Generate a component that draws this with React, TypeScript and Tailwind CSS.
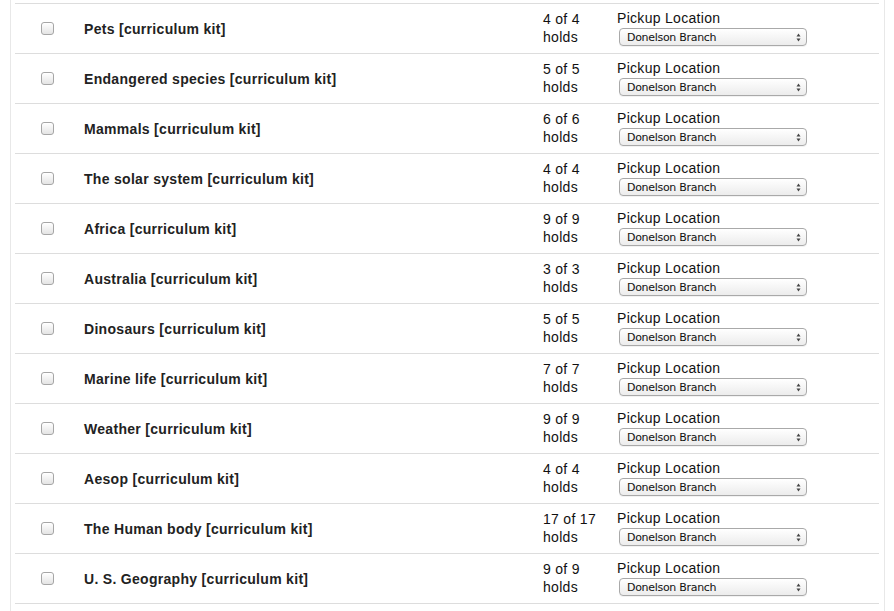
import React from "react";

const rows: [string, string][] = [
  ["Pets [curriculum kit]", "4 of 4"],
  ["Endangered species [curriculum kit]", "5 of 5"],
  ["Mammals [curriculum kit]", "6 of 6"],
  ["The solar system [curriculum kit]", "4 of 4"],
  ["Africa [curriculum kit]", "9 of 9"],
  ["Australia [curriculum kit]", "3 of 3"],
  ["Dinosaurs [curriculum kit]", "5 of 5"],
  ["Marine life [curriculum kit]", "7 of 7"],
  ["Weather [curriculum kit]", "9 of 9"],
  ["Aesop [curriculum kit]", "4 of 4"],
  ["The Human body [curriculum kit]", "17 of 17"],
  ["U. S. Geography [curriculum kit]", "9 of 9"],
];

function Checkbox() {
  return (
    <div className="w-[13px] h-[13px] rounded-[3px] border border-[#a6a6a6] bg-gradient-to-b from-[#ffffff] to-[#e4e4e4] shadow-[inset_0_1px_0_#fff]" />
  );
}

function SelectBox() {
  return (
    <div className="mt-px w-[188px] h-[18px] rounded-[4px] border border-[#a9a9a9] bg-gradient-to-b from-[#ffffff] to-[#ececec] flex items-center justify-between pl-[7px] pr-[5px] shadow-[0_1px_0_rgba(0,0,0,0.05)]">
      <span className="text-[11px] leading-none text-[#111] font-['DejaVu_Sans',sans-serif] tracking-[-0.3px]">
        Donelson Branch
      </span>
      <svg width="5" height="9" viewBox="0 0 5 9">
        <path d="M2.5 0.5 L4.5 3.5 L0.5 3.5 Z" fill="#444" />
        <path d="M2.5 8.5 L4.5 5.5 L0.5 5.5 Z" fill="#444" />
      </svg>
    </div>
  );
}

export default function App() {
  return (
    <div className="w-[894px] h-[611px] bg-white overflow-hidden font-['Liberation_Sans',Arial,sans-serif]">
      <div className="ml-[10px] w-[875px] h-[611px] border-l border-r border-[#e8e8e8] pl-[4px] pr-[5px] pt-[3px]">
        <div className="border-b border-[#dddddd]">
          {rows.map(([title, holds], i) => (
            <div key={i} className="flex h-[50px] border-t border-[#dddddd]">
              <div className="w-[69px] flex items-center pl-[26px]">
                <Checkbox />
              </div>
              <div className="w-[459px] flex items-center pt-[2px] text-[14px] font-bold tracking-[0.3px] text-[#222]">
                {title}
              </div>
              <div className="w-[74px] pt-[6px] text-[14px] leading-[18px] tracking-[0.3px] text-[#111]">
                <div>{holds}</div>
                <div>holds</div>
              </div>
              <div className="pt-[5px] text-[14px] leading-[18px] text-[#111]">
                <div className="tracking-[0.3px]">Pickup Location</div>
                <div className="pl-[2px]">
                  <SelectBox />
                </div>
              </div>
            </div>
          ))}
        </div>
      </div>
    </div>
  );
}
